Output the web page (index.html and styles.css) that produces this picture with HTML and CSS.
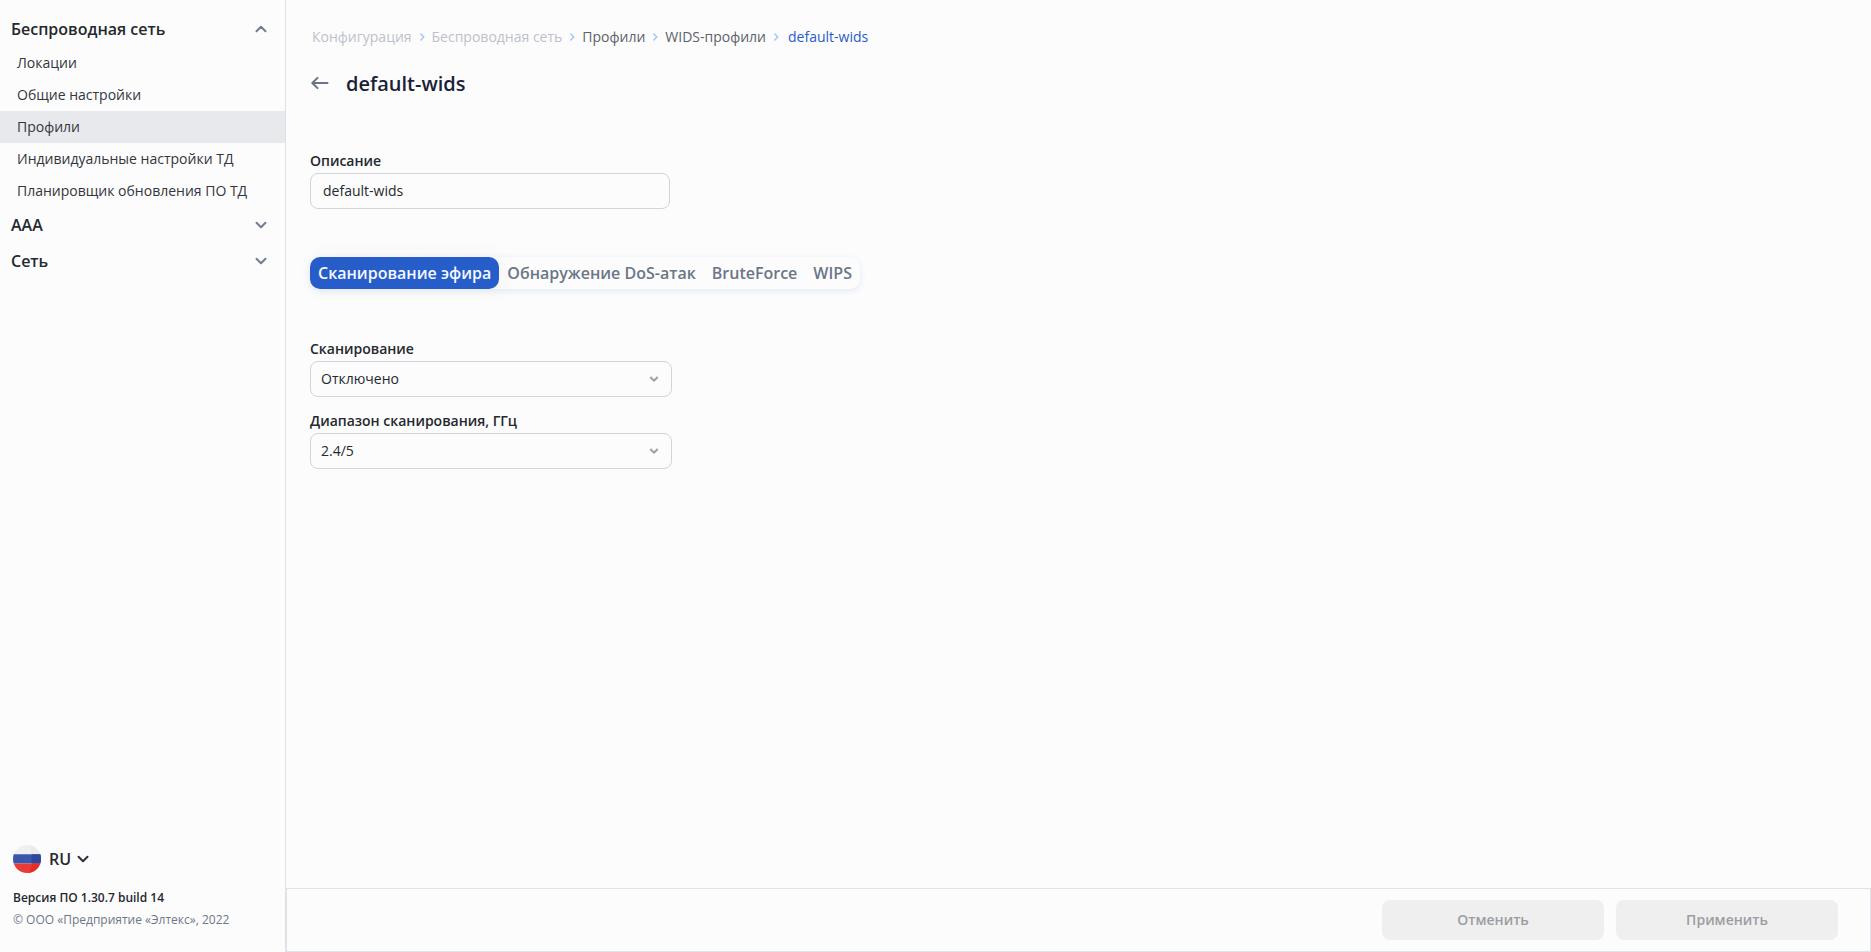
FILE: index.html
```html
<!DOCTYPE html>
<html lang="ru">
<head>
<meta charset="utf-8">
<title>default-wids</title>
<link rel="stylesheet" href="styles.css">
</head>
<body>
<div class="app">
  <aside class="sidebar">
    <nav class="menu">
      <button class="menu-group" type="button" aria-expanded="true">Беспроводная сеть
        <svg class="chevron" width="12" height="8" viewBox="0 0 12 8"><path d="M1.500 6.200 6 1.700l4.500 4.500"/></svg>
      </button>
      <a class="menu-item" href="#">Локации</a>
      <a class="menu-item" href="#">Общие настройки</a>
      <a class="menu-item active" href="#">Профили</a>
      <a class="menu-item" href="#">Индивидуальные настройки ТД</a>
      <a class="menu-item" href="#">Планировщик обновления ПО ТД</a>
      <button class="menu-group" type="button">AAA
        <svg class="chevron" width="12" height="8" viewBox="0 0 12 8"><path d="M1.500 1.700 6 6.200l4.500-4.500"/></svg>
      </button>
      <button class="menu-group" type="button">Сеть
        <svg class="chevron" width="12" height="8" viewBox="0 0 12 8"><path d="M1.500 1.700 6 6.200l4.500-4.500"/></svg>
      </button>
    </nav>
    <div class="info">
      <button class="language" type="button">
        <svg width="28" height="28" viewBox="0 0 28 28">
          <clipPath id="disc"><circle cx="14" cy="14" r="14"/></clipPath>
          <g clip-path="url(#disc)">
            <path fill="#f0f0f0" d="M0 0h28v9.300H0z"/>
            <path fill="#3a58ab" d="M0 9.300h28v9.300H0z"/>
            <path fill="#e83c38" d="M0 18.600h28V28H0z"/>
            <path fill="#ebebeb" d="M16.500 0H28v9.300h-9.500Q18.400 4 16.500 0z"/>
            <path fill="#2c479c" d="M18.500 9.300H28v9.300h-9.300z"/>
            <path fill="#e62e25" d="M18.700 18.600H28V28H15q3.500-3.500 3.700-9.400z"/>
          </g>
        </svg>
        <span>RU</span>
        <svg class="chevron dark" width="12" height="8" viewBox="0 0 12 8"><path d="M1.500 1.700 6 6.200l4.500-4.500"/></svg>
      </button>
      <div class="version">Версия ПО 1.30.7 build 14</div>
      <div class="copyright">© ООО «Предприятие «Элтекс», 2022</div>
    </div>
  </aside>
  <div class="page">
    <main class="content">
      <nav class="breadcrumbs">
        <span class="muted">Конфигурация</span>
        <svg width="6" height="10" viewBox="0 0 6 10"><path d="M1.500 1.500 4.700 5 1.500 8.500"/></svg>
        <span class="muted">Беспроводная сеть</span>
        <svg width="6" height="10" viewBox="0 0 6 10"><path d="M1.500 1.500 4.700 5 1.500 8.500"/></svg>
        <a href="#">Профили</a>
        <svg width="6" height="10" viewBox="0 0 6 10"><path d="M1.500 1.500 4.700 5 1.500 8.500"/></svg>
        <a href="#">WIDS-профили</a>
        <svg width="6" height="10" viewBox="0 0 6 10"><path d="M1.500 1.500 4.700 5 1.500 8.500"/></svg>
        <a class="current" href="#">default-wids</a>
      </nav>
      <header class="heading">
        <button class="back" type="button" aria-label="Назад">
          <svg width="18" height="14" viewBox="0 0 18 14"><path d="M16.500 6H1.800M6.500 .9 1.300 6l5.200 5.100"/></svg>
        </button>
        <h1>default-wids</h1>
      </header>
      <div class="field description">
        <label for="description">Описание</label>
        <input id="description" type="text" value="default-wids">
      </div>
      <div class="tabs" role="tablist">
        <button class="tab selected" role="tab" type="button" aria-selected="true">Сканирование эфира</button>
        <button class="tab" role="tab" type="button">Обнаружение DoS-атак</button>
        <button class="tab" role="tab" type="button">BruteForce</button>
        <button class="tab" role="tab" type="button">WIPS</button>
      </div>
      <form class="settings">
        <div class="field">
          <label for="scan">Сканирование</label>
          <div class="select">
            <select id="scan"><option>Отключено</option></select>
            <svg width="10" height="8" viewBox="0 0 10 8"><path d="M1.300 2 5 5.700 8.700 2"/></svg>
          </div>
        </div>
        <div class="field">
          <label for="band">Диапазон сканирования, ГГц</label>
          <div class="select">
            <select id="band"><option>2.4/5</option></select>
            <svg width="10" height="8" viewBox="0 0 10 8"><path d="M1.300 2 5 5.700 8.700 2"/></svg>
          </div>
        </div>
      </form>
    </main>
    <footer class="actions">
      <button type="button" disabled>Отменить</button>
      <button type="button" disabled>Применить</button>
    </footer>
  </div>
</div>
</body>
</html>
```
FILE: styles.css
```css
* {
  box-sizing: border-box;
}

body {
  margin: 0;
  background: #fcfcfc;
  color: #25282f;
  font: 14px/20px "Open Sans", "Noto Sans", sans-serif;
}

button,
input,
select {
  font: inherit;
  color: inherit;
}

button {
  padding: 0;
  border: 0;
  background: none;
}

a {
  color: inherit;
  text-decoration: none;
}

svg {
  flex: none;
  fill: none;
}

.app {
  display: flex;
  min-height: 100vh;
}

.sidebar {
  display: flex;
  flex: none;
  flex-direction: column;
  justify-content: space-between;
  width: 286px;
  padding: 11px 0 22px;
  border-right: 1px solid #dfe1e6;
}

.menu {
  display: flex;
  flex-direction: column;
}

.menu-group {
  display: flex;
  align-items: center;
  justify-content: space-between;
  height: 36px;
  padding: 0 18px 0 11px;
  font-size: 16px;
  font-weight: 600;
}

.menu-item {
  padding: 6px 17px;
  color: #33363d;
}

.menu-item.active {
  background: #e8e9ed;
}

.chevron {
  stroke: #727d90;
  stroke-width: 2;
  stroke-linecap: round;
  stroke-linejoin: round;
}

.chevron.dark {
  stroke: #2b303b;
}

.info {
  padding: 0 13px;
  font-size: 12px;
}

.language {
  display: flex;
  align-items: center;
  gap: 8px;
  font-size: 16px;
  font-weight: 600;
}

.language .chevron {
  margin-left: -2px;
}

.version {
  margin-top: 15px;
  font-weight: 600;
}

.copyright {
  margin-top: 2px;
  color: #6e7787;
}

.page {
  display: flex;
  flex: 1;
  flex-direction: column;
}

.content {
  flex: 1;
  padding: 27px 24px;
}

.breadcrumbs {
  display: flex;
  align-items: center;
  gap: 7px;
  padding-left: 2px;
  color: #5c616b;
}

.breadcrumbs svg {
  stroke: #a9c6f8;
  stroke-width: 1.500;
}

.breadcrumbs .muted {
  color: #bcc1cb;
}

.breadcrumbs .current {
  margin-left: 2px;
  color: #275dc8;
}

.heading {
  display: flex;
  align-items: center;
  gap: 17px;
  margin-top: 23px;
}

.back {
  display: flex;
  padding-left: 1px;
  stroke: #6b7589;
  stroke-width: 2;
  stroke-linecap: round;
  stroke-linejoin: round;
}

h1 {
  margin: 0;
  color: #1b1f38;
  font-size: 20px;
  line-height: 28px;
  font-weight: 600;
}

.field {
  display: flex;
  flex-direction: column;
  gap: 2px;
  width: 362px;
}

.field label {
  font-weight: 600;
}

.description {
  width: 360px;
  margin-top: 53px;
}

input,
select {
  width: 100%;
  height: 36px;
  border: 1px solid #d1d4dc;
  border-radius: 8px;
  background: #fcfcfc;
}

input {
  padding: 0 12px 2px;
}

select {
  padding: 0 10px;
  appearance: none;
}

.select {
  display: grid;
  align-items: center;
}

.select > * {
  grid-area: 1 / 1;
}

.select svg {
  justify-self: end;
  margin-right: 13px;
  pointer-events: none;
  stroke: #9c9dab;
  stroke-width: 2;
}

.tabs {
  display: flex;
  width: fit-content;
  margin-top: 48px;
  border-radius: 10px;
  box-shadow: 0 2px 6px #275dc81f;
  background: #fcfcfc;
}

.tab {
  height: 32px;
  padding: 0 8px;
  border-radius: 10px;
  color: #6b7688;
  font-size: 16px;
  font-weight: 600;
}

.tab.selected {
  background: #275dc8;
  box-shadow: 4px 0 24px #0000000a;
  color: #f5f8ff;
}

.settings {
  display: flex;
  flex-direction: column;
  gap: 14px;
  margin-top: 50px;
}

.actions {
  display: flex;
  justify-content: flex-end;
  gap: 12px;
  padding: 11px 32px;
  border: 1px solid #e0e2e9;
}

.actions button {
  width: 222px;
  height: 40px;
  border-radius: 8px;
  background: #efefef;
  color: #9b9da1;
  font-weight: 600;
}
```
